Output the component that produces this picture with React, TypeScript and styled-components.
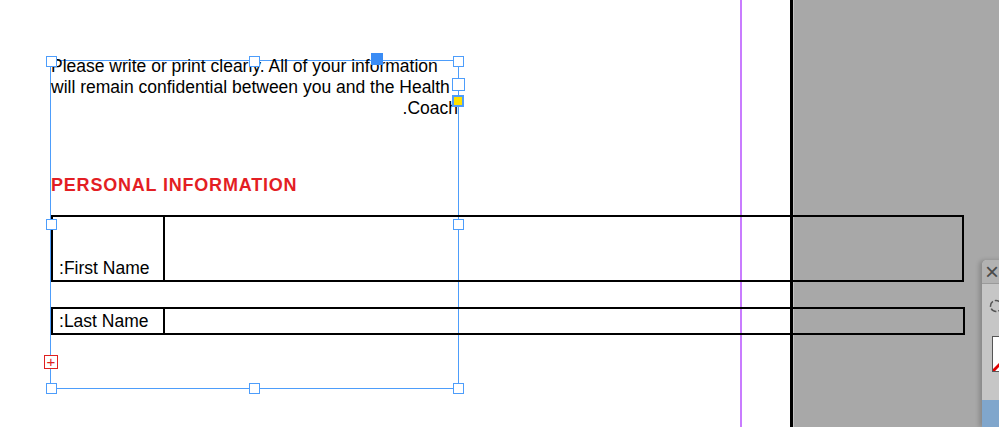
// layout document editor view: page, page edge, pasteboard, and a selected text frame

import styled, { createGlobalStyle } from "styled-components";

const GlobalStyle = createGlobalStyle`
    html, body {
        margin: 0;
        padding: 0;
        background: #a8a8a8;
        overflow: hidden;
    }
`;

const FRAME_BLUE = "#4d9dfb";

// the whole canvas: white page, black page edge, grey pasteboard
const Canvas = styled.div`
    display: grid;
    grid-template-columns: 790px 3px 1fr;
    grid-template-rows: 427px;
    width: 999px;
    height: 427px;
    overflow: hidden;
    font-family: "Liberation Sans", Arial, sans-serif;
`;

// page with the purple margin guide
const Page = styled.div`
    grid-area: 1 / 1;
    background: linear-gradient(
        to right,
        #ffffff 740px,
        #c97cff 740px,
        #c97cff 742px,
        #ffffff 742px
    );
`;

const PageEdge = styled.div`
    grid-area: 1 / 2;
    background: #000;
`;

const Pasteboard = styled.div`
    grid-area: 1 / 3;
    position: relative;
    background: #a8a8a8;
    border-left: 1px solid #c4c4c4;
`;

// layer for the frames laid on top of page and pasteboard
const Layer = styled.div`
    grid-area: 1 / 1 / 2 / 4;
    z-index: 1;
    padding: 60px 0 0 50px;
`;

// the selected text frame
const TextFrame = styled.div`
    position: relative;
    box-sizing: border-box;
    width: 409px;
    height: 329px;
    border: 1px solid ${FRAME_BLUE};
    color: #000;
`;

const Intro = styled.p`
    direction: rtl;
    text-align: left;
    text-align-last: right;
    margin: -5px 0 0;
    font-size: 17.5px;
    line-height: 21px;
`;

const Heading = styled.h2`
    margin: 55px 0 0;
    color: #e31e24;
    font-size: 18px;
    line-height: 22px;
    font-weight: bold;
    letter-spacing: 0.8px;
`;

// one row of the form table
const FieldRow = styled.div<{ $width: number; $height: number; $gap: number }>`
    display: flex;
    box-sizing: border-box;
    width: ${(p) => p.$width}px;
    height: ${(p) => p.$height}px;
    margin-top: ${(p) => p.$gap}px;
    border: 2px solid #000;
    align-items: stretch;
`;

const LabelCell = styled.div<{ $bottom?: boolean }>`
    display: flex;
    align-items: ${(p) => (p.$bottom ? "flex-end" : "center")};
    box-sizing: border-box;
    width: 112px;
    padding: 0 0 ${(p) => (p.$bottom ? "2px" : "0")} 6px;
    border-right: 2px solid #000;
`;

const Label = styled.span`
    direction: rtl;
    font-size: 17.5px;
    line-height: 20px;
`;

const ValueCell = styled.div`
    flex: 1;
`;

// selection handles on the frame
const Handle = styled.span<{ $x: number; $y: number }>`
    position: absolute;
    box-sizing: border-box;
    width: 11px;
    height: 11px;
    left: calc(${(p) => p.$x}% - 5.5px);
    top: calc(${(p) => p.$y}% - 5.5px);
    background: #fff;
    border: 1px solid ${FRAME_BLUE};
`;

const ThreadPort = styled.span<{ $fill: string; $top: number; $size: number }>`
    position: absolute;
    box-sizing: border-box;
    left: calc(100% - ${(p) => p.$size / 2}px);
    top: ${(p) => p.$top}px;
    width: ${(p) => p.$size}px;
    height: ${(p) => p.$size}px;
    background: ${(p) => p.$fill};
    border: ${(p) => (p.$fill === "#fff" ? 1 : 2)}px solid ${FRAME_BLUE};
`;

const AnchorMark = styled.span`
    position: absolute;
    left: 320px;
    top: -8px;
    width: 12px;
    height: 12px;
    background: #3a8cf5;
`;

const OverflowMark = styled.span`
    position: absolute;
    left: -7px;
    top: 294px;
    box-sizing: border-box;
    width: 14px;
    height: 14px;
    background: #fff;
    border: 1px solid #e02020;
    color: #e02020;
    font-size: 15px;
    line-height: 11px;
    text-align: center;
`;

// floating panel at the right edge
const Panel = styled.div`
    position: absolute;
    left: 188px;
    top: 260px;
    width: 40px;
    bottom: 0;
    display: flex;
    flex-direction: column;
    background: #c6c6c6;
    border-top-left-radius: 5px;
    box-shadow: -3px 0 4px rgba(0, 0, 0, 0.18);
    overflow: hidden;
`;

const PanelHeader = styled.div`
    height: 23px;
    padding-left: 3px;
    background: #b2b2b2;
    border-bottom: 1px solid #9a9a9a;
    color: #4a4a4a;
    font-size: 24px;
    line-height: 23px;
`;

const PanelBody = styled.div`
    flex: 1;
    display: flex;
    flex-direction: column;
    padding: 14px 0 0 5px;
`;

const Swatch = styled.div`
    margin: 22px 0 0 5px;
    width: 30px;
    height: 34px;
    background: #fff;
    border: 1px solid #555;
    overflow: hidden;
`;

const PanelFooter = styled.div`
    height: 27px;
    background: #80a6cc;
`;

export default function App() {
    return (
        <>
            <GlobalStyle />
            <Canvas>
                <Page />
                <PageEdge />
                <Pasteboard>
                    <Panel>
                        <PanelHeader>×</PanelHeader>
                        <PanelBody>
                            <svg width="16" height="16" viewBox="0 0 16 16">
                                <circle cx="9" cy="8" r="5.5" fill="none" stroke="#555" strokeWidth="1.5" strokeDasharray="6 2" />
                            </svg>
                            <Swatch>
                                <svg width="30" height="34" viewBox="0 0 30 34">
                                    <line x1="0" y1="34" x2="30" y2="4" stroke="#e00000" strokeWidth="3" />
                                </svg>
                            </Swatch>
                        </PanelBody>
                        <PanelFooter />
                    </Panel>
                </Pasteboard>
                <Layer>
                    <TextFrame>
                        <Intro>
                            Please write or print clearly. All of your information will remain
                            confidential between you and the Health Coach.
                        </Intro>
                        <Heading>PERSONAL INFORMATION</Heading>
                        <FieldRow $width={913} $height={67} $gap={19}>
                            <LabelCell $bottom>
                                <Label>First Name:</Label>
                            </LabelCell>
                            <ValueCell />
                        </FieldRow>
                        <FieldRow $width={914} $height={28} $gap={25}>
                            <LabelCell>
                                <Label>Last Name:</Label>
                            </LabelCell>
                            <ValueCell />
                        </FieldRow>

                        <Handle $x={0} $y={0} />
                        <Handle $x={50} $y={0} />
                        <Handle $x={100} $y={0} />
                        <Handle $x={0} $y={50} />
                        <Handle $x={100} $y={50} />
                        <Handle $x={0} $y={100} />
                        <Handle $x={50} $y={100} />
                        <Handle $x={100} $y={100} />
                        <AnchorMark />
                        <ThreadPort $fill="#fff" $top={17} $size={13} />
                        <ThreadPort $fill="#ffe100" $top={34} $size={12} />
                        <OverflowMark>+</OverflowMark>
                    </TextFrame>
                </Layer>
            </Canvas>
        </>
    );
}
